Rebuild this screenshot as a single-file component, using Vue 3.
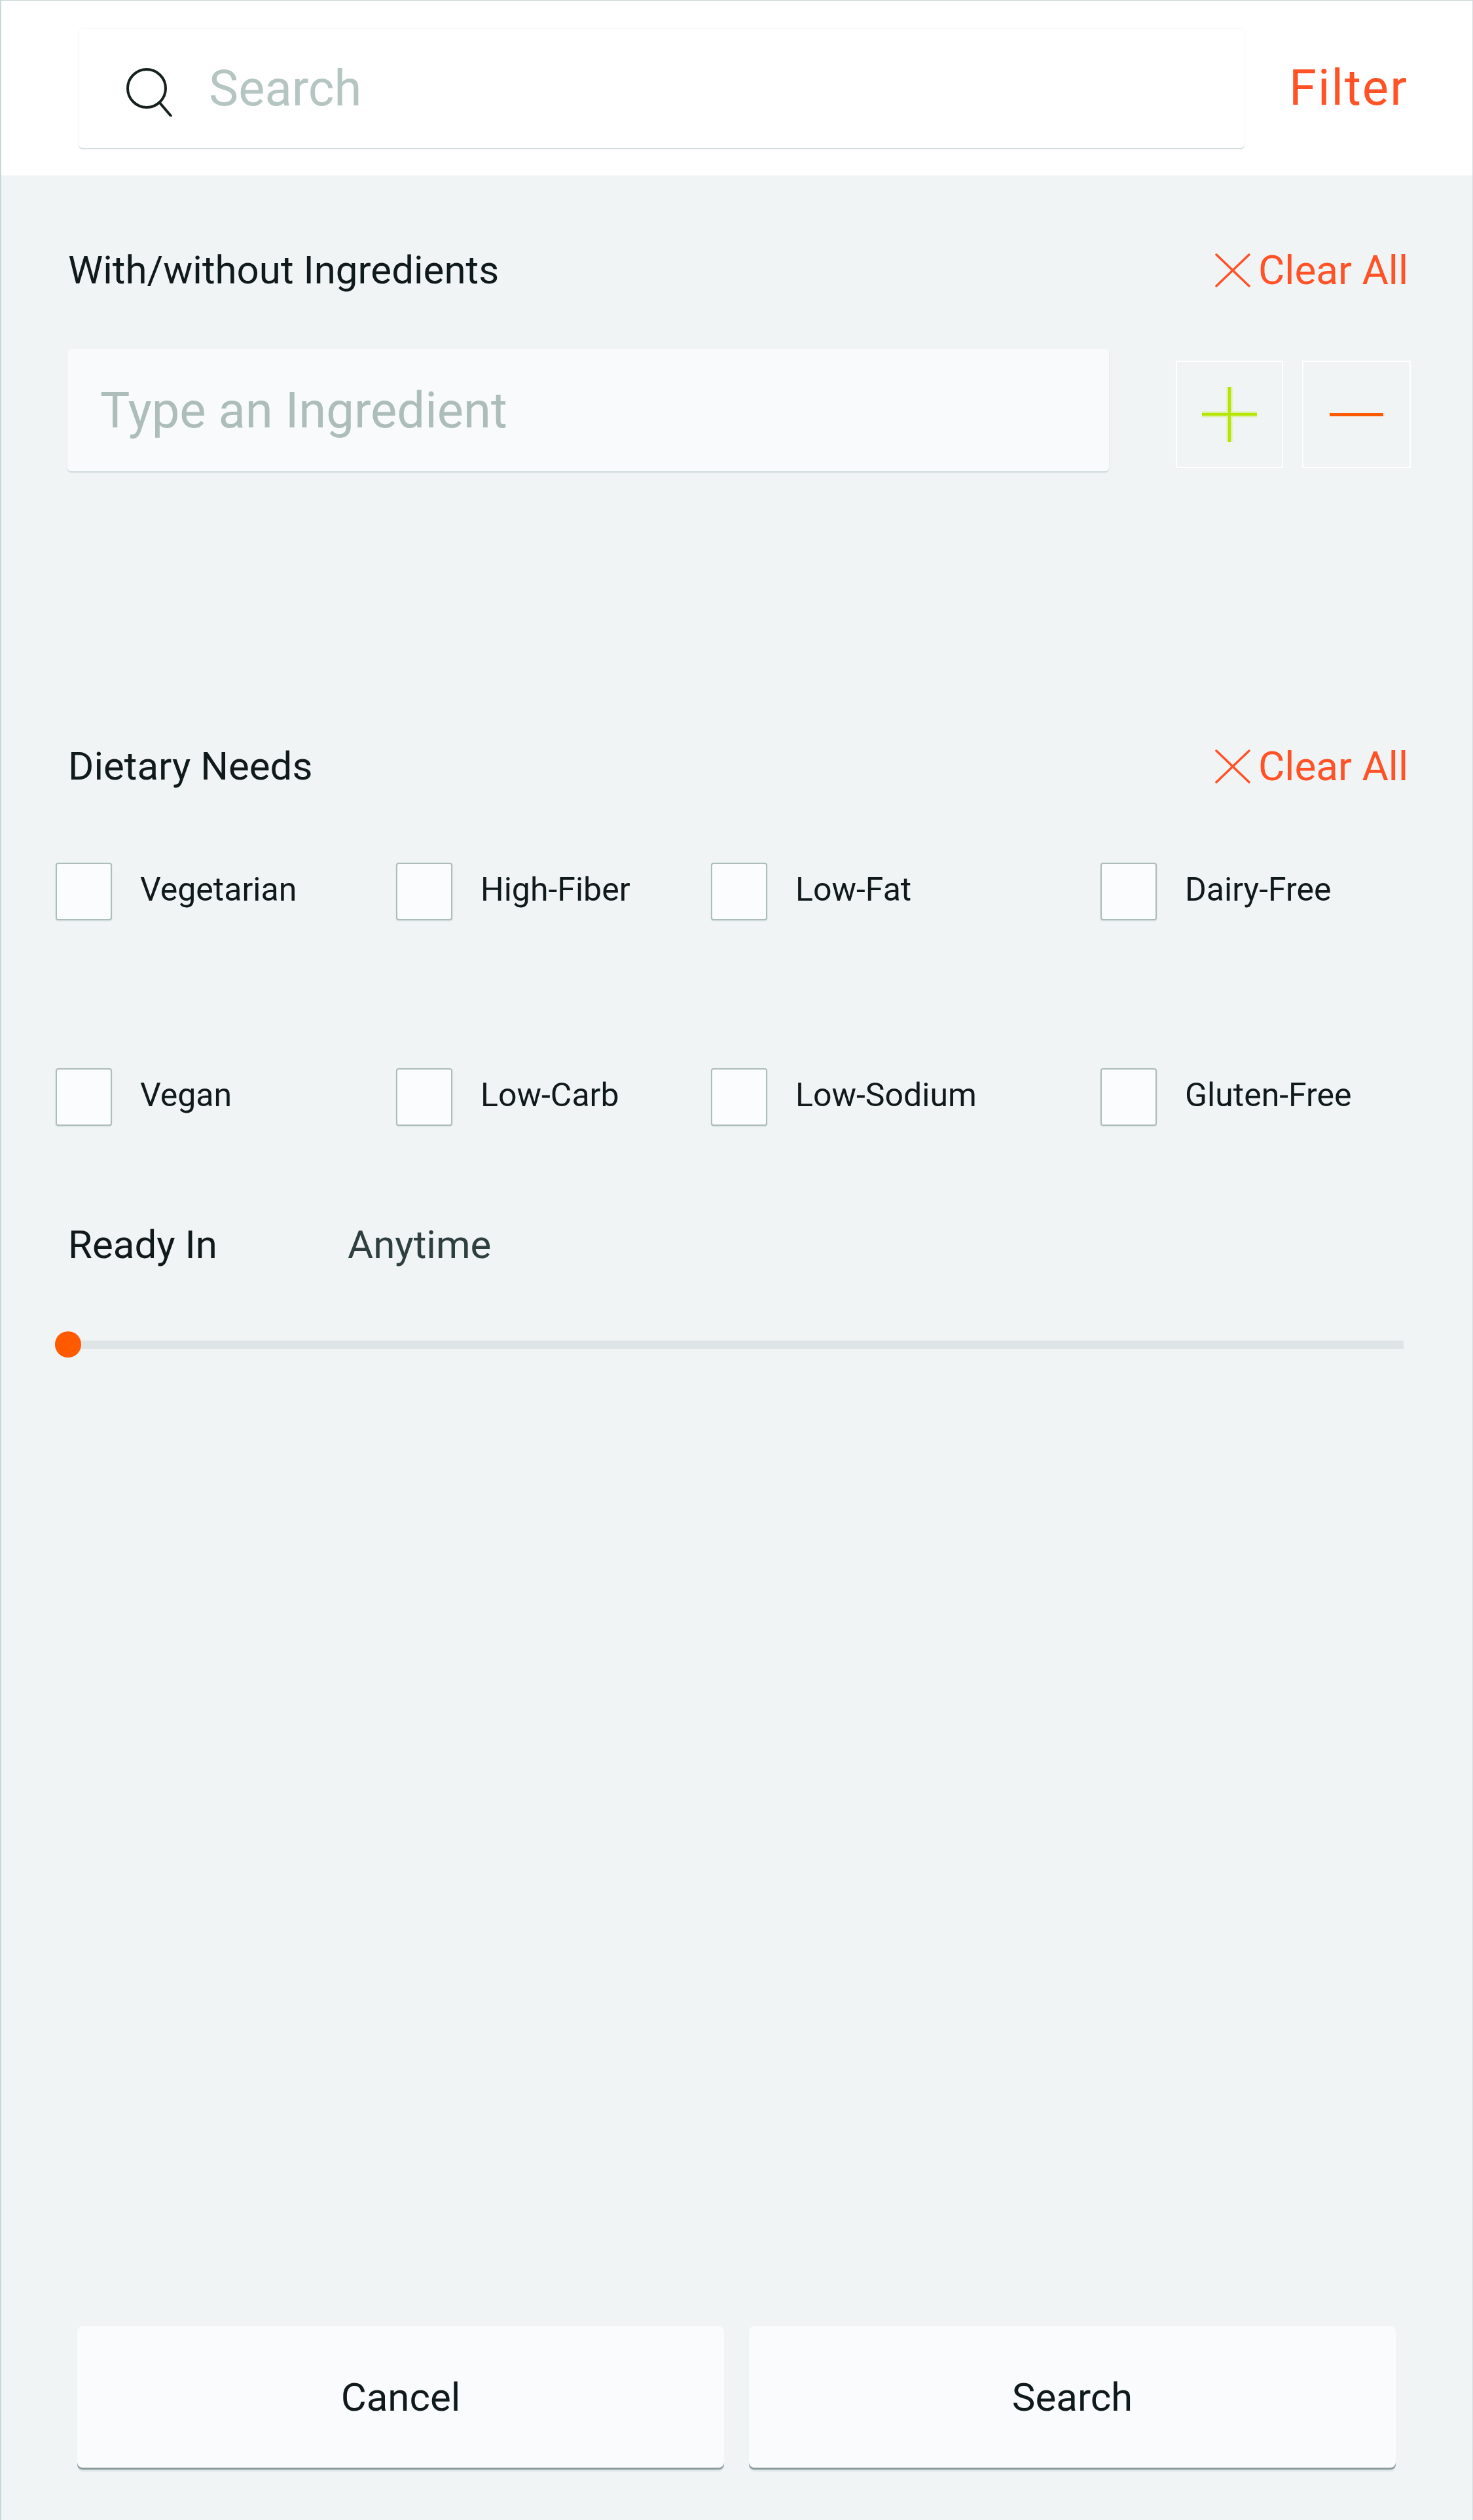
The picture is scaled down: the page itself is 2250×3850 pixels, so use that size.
<script setup>
const needs = ['Vegetarian', 'High-Fiber', 'Low-Fat', 'Dairy-Free', 'Vegan', 'Low-Carb', 'Low-Sodium', 'Gluten-Free']
</script>

<template>
  <div class="screen">
    <header class="top">
      <div class="search-box">
        <svg class="search-icon" width="72" height="74" viewBox="0 0 72 74" fill="none" stroke="#15201f" stroke-width="4">
          <circle cx="32" cy="31" r="29" />
          <path d="M52 53 L69 73" stroke-linecap="round" />
        </svg>
        <span class="search-text">Search</span>
      </div>
      <span class="filter">Filter</span>
    </header>

    <main class="body">
      <div class="head first">
        <span class="title">With/without Ingredients</span>
        <span class="clear">
          <svg width="54" height="52" viewBox="0 0 54 52" stroke="#ff5226" stroke-width="3.5" stroke-linecap="round">
            <path d="M2 2 L52 50 M52 2 L2 50" />
          </svg>
          <span>Clear All</span>
        </span>
      </div>

      <div class="ingredient-row">
        <div class="ingredient">Type an Ingredient</div>
        <div class="square plus">
          <svg width="84" height="84" viewBox="0 0 84 84">
            <path d="M0 42 H84 M42 0 V84" stroke="#b5e600" stroke-opacity="0.3" stroke-width="9" />
            <path d="M0 42 H84 M42 0 V84" stroke="#b5e600" stroke-width="4" />
          </svg>
        </div>
        <div class="square minus"><i class="dash"></i></div>
      </div>

      <div class="head dietary">
        <span class="title">Dietary Needs</span>
        <span class="clear">
          <svg width="54" height="52" viewBox="0 0 54 52" stroke="#ff5226" stroke-width="3.5" stroke-linecap="round">
            <path d="M2 2 L52 50 M52 2 L2 50" />
          </svg>
          <span>Clear All</span>
        </span>
      </div>

      <div class="needs">
        <label v-for="n in needs" :key="n" class="need">
          <span class="box"></span>
          <span class="need-label">{{ n }}</span>
        </label>
      </div>

      <div class="ready">
        <span class="title ready-label">Ready In</span>
        <span class="title anytime">Anytime</span>
      </div>

      <div class="slider">
        <div class="track"></div>
        <div class="thumb"></div>
      </div>
    </main>

    <footer class="foot">
      <button class="btn">Cancel</button>
      <button class="btn">Search</button>
    </footer>
  </div>
</template>

<style>
html, body { margin: 0; padding: 0; }
</style>

<style scoped>
.screen {
  width: 2250px;
  height: 3850px;
  box-sizing: border-box;
  display: flex;
  flex-direction: column;
  background: #f0f4f5;
  border-top: 1px solid #c6d6d6;
  border-left: 2px solid #c6d9d9;
  border-right: 1px solid #d5e0e0;
  font-family: Roboto, "Liberation Sans", sans-serif;
  color: #111a1a;
}
.top {
  height: 267px;
  flex: none;
  background: #fff;
  display: flex;
  align-items: flex-start;
}
.search-box {
  margin: 43px 0 0 118px;
  width: 1781px;
  height: 182px;
  box-sizing: border-box;
  padding-left: 72px;
  border-radius: 6px;
  background: #fff;
  box-shadow: 0 2px 1px #d3dddf, 0 0 3px #eef2f3;
  display: flex;
  align-items: center;
}
.search-icon { flex: none; margin-top: 12px; }
.search-text {
  margin-left: 55px;
  font-size: 76px;
  line-height: 90px;
  color: #b5c5c1;
}
.filter {
  margin: 88px 0 0 68px;
  font-size: 76px;
  line-height: 90px;
  letter-spacing: 2px;
  color: #ff5226;
}
.body {
  flex: 1;
  padding: 0 94px 0 102px;
}
.head {
  display: flex;
  justify-content: space-between;
  align-items: center;
  height: 60px;
}
.first { margin-top: 115px; }
.dietary { margin-top: 421px; }
.title {
  font-size: 60px;
  line-height: 60px;
}
.clear {
  display: flex;
  align-items: center;
  gap: 12px;
  margin-right: 4px;
  font-size: 62px;
  line-height: 60px;
  color: #ff5226;
}
.clear svg { display: block; }
.ingredient-row {
  margin: 90px 0 0 -1px;
  display: flex;
  align-items: flex-start;
}
.ingredient {
  width: 1591px;
  height: 187px;
  box-sizing: border-box;
  padding-left: 50px;
  display: flex;
  align-items: center;
  border-radius: 6px;
  background: #f8fafb;
  box-shadow: 0 2px 2px #cdd8d9;
  font-size: 76px;
  color: #adbdb9;
}
.square {
  margin-top: 18px;
  height: 164px;
  box-sizing: border-box;
  border: 2px solid #fff;
  display: flex;
  align-items: center;
  justify-content: center;
}
.plus { width: 164px; margin-left: 102px; }
.minus { width: 166px; margin-left: 29px; }
.plus svg { display: block; }
.dash {
  display: block;
  width: 82px;
  height: 5px;
  background: #ff5a00;
}
.needs {
  margin: 117px 0 0 -19px;
  display: grid;
  grid-template-columns: 520px 481px 595px auto;
  row-gap: 226px;
}
.need {
  display: flex;
  align-items: center;
  height: 88px;
}
.box {
  flex: none;
  width: 86px;
  height: 88px;
  box-sizing: border-box;
  border: 2px solid #adbdb9;
  border-radius: 4px;
  background: #fafcfd;
  box-shadow: 0 1px 2px #cfd9da;
}
.need-label {
  margin-left: 43px;
  padding-bottom: 6px;
  font-size: 50px;
  line-height: 60px;
}
.ready {
  margin-top: 152px;
  display: flex;
}
.ready-label { width: 427px; }
.anytime { color: #2f3f3f; }
.slider {
  position: relative;
  margin: 102px 11px 0 -20px;
  height: 40px;
  display: flex;
  align-items: center;
}
.track {
  flex: 1;
  height: 13px;
  background: #dfe5e6;
}
.thumb {
  position: absolute;
  left: 0;
  top: 0;
  width: 40px;
  height: 40px;
  border-radius: 50%;
  background: #ff5a00;
}
.foot {
  flex: none;
  display: flex;
  gap: 38px;
  padding: 0 0 80px 116px;
}
.btn {
  width: 988px;
  height: 216px;
  padding: 0;
  border: 0;
  border-radius: 8px;
  background: #f9fbfc;
  box-shadow: 0 3px 0 #8a9b9c, 0 6px 0 #dfe7e8;
  font-family: inherit;
  font-size: 60px;
  color: #111a1a;
}
</style>
